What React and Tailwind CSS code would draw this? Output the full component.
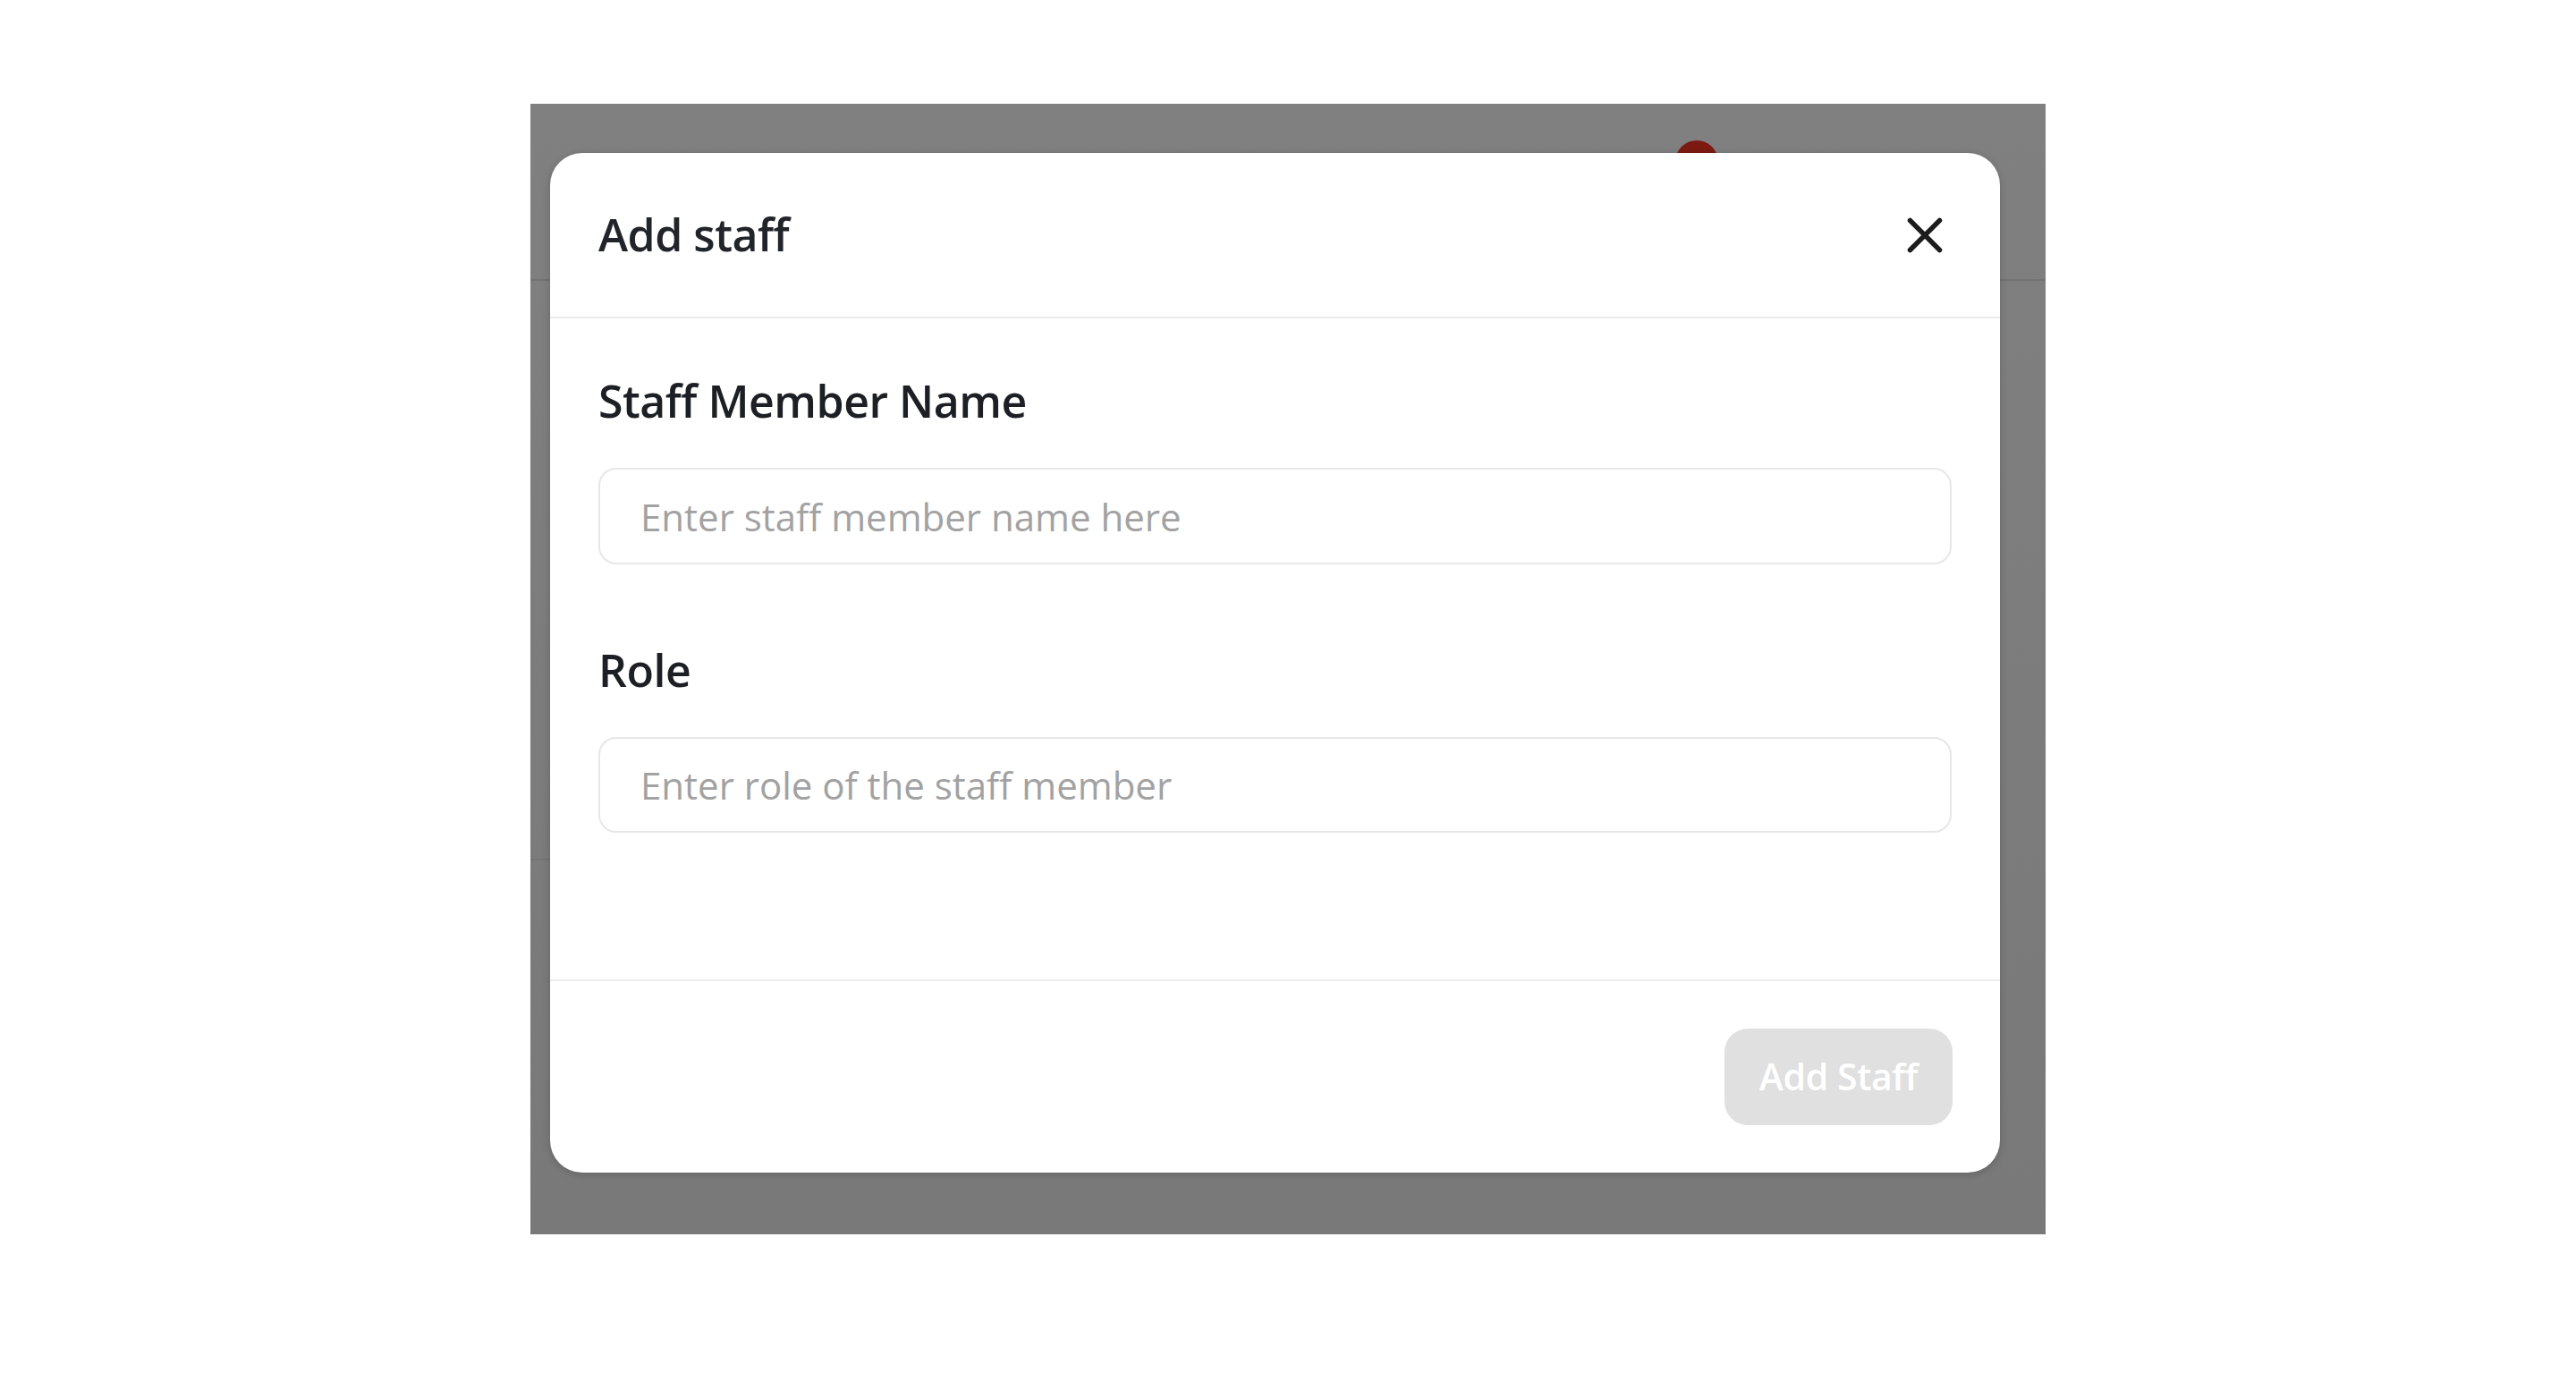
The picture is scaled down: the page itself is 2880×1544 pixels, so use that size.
import React from "react";

function CloseIcon() {
  return (
    <svg width="40" height="40" viewBox="0 0 40 40" fill="none" aria-hidden="true">
      <path d="M3.5 3.5 L36.5 36.5 M36.5 3.5 L3.5 36.5" stroke="#1c1c1c" strokeWidth="5.5" strokeLinecap="round" />
    </svg>
  );
}

function Field({ label, placeholder, gapTop, inputH }) {
  return (
    <div className={gapTop}>
      <div className="text-[50px] leading-[68px] font-semibold text-[#1c1f23] tracking-[-0.01em]">{label}</div>
      <input
        type="text"
        placeholder={placeholder}
        className={`mt-[41px] w-full ${inputH} rounded-[20px] border-2 border-[#e7e7e7] bg-white pl-[45px] text-[42px] text-[#333] placeholder:text-[#a2a2a2] outline-none`}
      />
    </div>
  );
}

export default function App() {
  return (
    <div
      className="min-h-[1544px] w-full bg-white pt-[116px] pl-[593px]"
      style={{ fontFamily: '"Open Sans", "Noto Sans", Arial, sans-serif' }}
    >
      <div className="relative w-[1694px] h-[1264px] bg-linear-to-b from-[#808080] to-[#797979] overflow-hidden">
        {/* background page, dimmed */}
        <div className="h-[198px] border-b-2 border-[#737373] flex items-start">
          <div className="ml-[1280px] mt-[41px] w-[48px] h-[48px] rounded-full bg-[#7c1a12]" />
        </div>
        <div className="w-[900px] h-[648px] border-b-2 border-[#747474]" />

        {/* modal */}
        <div className="absolute left-[22px] top-[55px] w-[1621px] rounded-[36px] bg-white shadow-[0_2px_10px_rgba(0,0,0,0.18)] flex flex-col">
          <div className="h-[185px] border-b-2 border-[#ececec] px-[54px] flex items-center justify-between">
            <div className="text-[50px] font-semibold text-[#212529] tracking-[-0.01em]">Add staff</div>
            <button className="w-[60px] h-[60px] flex items-center justify-center">
              <CloseIcon />
            </button>
          </div>

          <div className="px-[54px] pt-[58px] pb-[164px]">
            <Field label="Staff Member Name" placeholder="Enter staff member name here" gapTop="" inputH="h-[108px]" />
            <Field label="Role" placeholder="Enter role of the staff member" gapTop="mt-[84px]" inputH="h-[107px]" />
          </div>

          <div className="border-t-2 border-[#ececec] p-[53px] flex justify-end">
            <button className="w-[255px] h-[108px] rounded-[26px] bg-[#e0e0e0] text-white text-[41px] font-semibold tracking-[-0.01em]">
              Add Staff
            </button>
          </div>
        </div>
      </div>
    </div>
  );
}
